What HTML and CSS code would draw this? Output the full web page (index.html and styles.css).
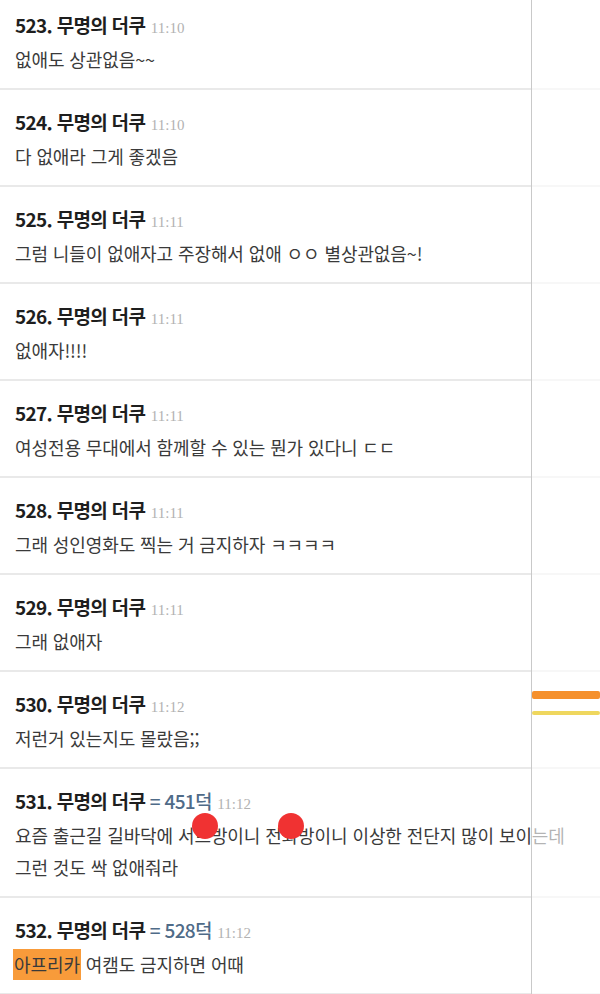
FILE: index.html
```html
<!DOCTYPE html>
<html lang="ko">
<head>
    <meta charset="UTF-8">
    <title>무명의 더쿠 댓글</title>
    <link rel="stylesheet" href="styles.css">
</head>
<body>
    <div id="page">
        <div id="thread">
            <div class="reply">
                <div class="reply-head">523. 무명의 더쿠 <span class="time">11:10</span></div>
                <div class="reply-body">없애도 상관없음~~</div>
            </div>
            <div class="reply">
                <div class="reply-head">524. 무명의 더쿠 <span class="time">11:10</span></div>
                <div class="reply-body">다 없애라 그게 좋겠음</div>
            </div>
            <div class="reply">
                <div class="reply-head">525. 무명의 더쿠 <span class="time">11:11</span></div>
                <div class="reply-body">그럼 니들이 없애자고 주장해서 없애 ㅇㅇ 별상관없음~!</div>
            </div>
            <div class="reply">
                <div class="reply-head">526. 무명의 더쿠 <span class="time">11:11</span></div>
                <div class="reply-body">없애자!!!!</div>
            </div>
            <div class="reply">
                <div class="reply-head">527. 무명의 더쿠 <span class="time">11:11</span></div>
                <div class="reply-body">여성전용 무대에서 함께할 수 있는 뭔가 있다니 ㄷㄷ</div>
            </div>
            <div class="reply">
                <div class="reply-head">528. 무명의 더쿠 <span class="time">11:11</span></div>
                <div class="reply-body">그래 성인영화도 찍는 거 금지하자 ㅋㅋㅋㅋ</div>
            </div>
            <div class="reply">
                <div class="reply-head">529. 무명의 더쿠 <span class="time">11:11</span></div>
                <div class="reply-body">그래 없애자</div>
            </div>
            <div class="reply">
                <div class="reply-head">530. 무명의 더쿠 <span class="time">11:12</span></div>
                <div class="reply-body">저런거 있는지도 몰랐음;;</div>
            </div>
            <div class="reply">
                <div class="reply-head">531. 무명의 더쿠 <span class="ref">= 451덕</span> <span class="time">11:12</span></div>
                <div class="reply-body">
                    요즘 출근길 길바닥에 서브방이니 전화방이니 이상한 전단지 많이 보이는데 그런 것도 싹 없애줘라
                    <span class="dot dot-1"></span>
                    <span class="dot dot-2"></span>
                </div>
            </div>
            <div class="reply">
                <div class="reply-head">532. 무명의 더쿠 <span class="ref">= 528덕</span> <span class="time">11:12</span></div>
                <div class="reply-body"><span class="mark">아프리카</span> 여캠도 금지하면 어때</div>
            </div>
        </div>

        <!-- 오른쪽 스크롤 영역 -->
        <div id="side">
            <div class="bar bar-orange"></div>
            <div class="bar bar-yellow"></div>
        </div>
    </div>
</body>
</html>
```

FILE: styles.css
```css
body {
    margin: 0;
    background-color: #fff;
    font-family: "Noto Sans CJK KR", "Noto Sans", sans-serif;
    color: #333;
}
#page {
    position: relative;
    width: 600px;
    height: 994px;
    overflow: hidden;
}
#thread {
    margin-top: -7px;       /* 첫 댓글이 위에서 살짝 잘려 있음 */
}
.reply {
    padding: 19px 0 13px 15px;
    border-bottom: 2px solid #e9e9e9;
}
.reply-head {
    height: 26px;
    overflow: hidden;
    font-size: 19px;
    font-weight: bold;
    line-height: 26px;
    color: #1e1e1e;
    letter-spacing: -0.7px;
    white-space: nowrap;
}
.ref {
    font-weight: 500;
    color: #4f6b88;
}
.time {
    font-family: "Liberation Serif", serif;
    font-weight: normal;
    font-size: 15px;
    line-height: 1;
    color: #b2b2b2;
    letter-spacing: 0;
    margin-left: 1px;
}
.reply-body {
    position: relative;
    margin-top: 5px;
    font-size: 18px;
    line-height: 32px;
    color: #3a3a3a;
    letter-spacing: -0.1px;
    word-break: keep-all;    /* 한글 단어 중간에서 줄바꿈 안 되게 */
}
.mark {
    background-color: #f89b3a;
    padding: 2px 1px 3px;
    margin-left: -2px;
}
.dot {
    position: absolute;
    top: -6px;
    width: 26px;
    height: 26px;
    border-radius: 50%;
    background-color: #f03232;
}
.dot-1 {
    left: 177px;
}
.dot-2 {
    left: 263px;
}
#side {
    position: absolute;
    top: 0;
    left: 531px;
    right: 0;
    bottom: 0;
    background-color: rgba(255, 255, 255, 0.62);
    border-left: 1px solid #c9c9c9;
}
.bar {
    border-radius: 2px;
}
.bar-orange {
    margin-top: 691px;
    height: 8px;
    background-color: #f5902c;
}
.bar-yellow {
    margin-top: 12px;
    height: 4px;
    background-color: #efd75e;
}
```
